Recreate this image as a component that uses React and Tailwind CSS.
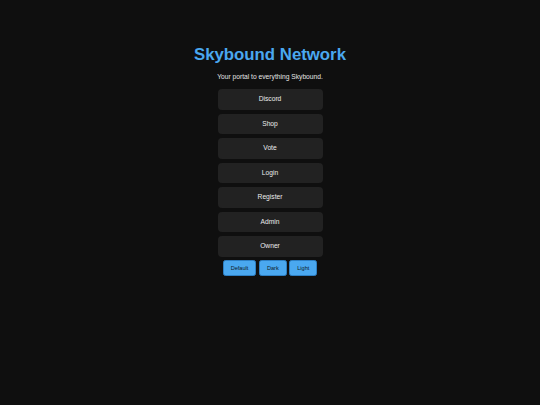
export default function App() {
  const links = ["Discord", "Shop", "Vote", "Login", "Register", "Admin", "Owner"];
  const themes = ["Default", "Dark", "Light"];

  return (
    <div
      className="min-h-[405px] w-full bg-[#0f0f0f] flex flex-col items-center pt-[45px]"
      style={{ fontFamily: '"Liberation Sans", Arial, sans-serif' }}
    >
      <h1 className="text-[16.8px] leading-[20px] font-bold text-[#4aa8f0]">Skybound Network</h1>
      <p className="mt-[8px] text-[6.7px] leading-[8px] text-[#e6e6e6]">
        Your portal to everything Skybound.
      </p>

      <div className="mt-[8px] flex flex-col gap-[4px]">
        {links.map((l) => (
          <a
            key={l}
            href="#"
            className="w-[105px] h-[20.5px] rounded-[4px] bg-[#222222] flex items-center justify-center text-[6.7px] text-[#ececec]"
          >
            {l}
          </a>
        ))}
      </div>

      <div className="mt-[3.5px] flex gap-[2.5px]">
        {themes.map((t) => (
          <button
            key={t}
            className="h-[15.7px] px-[7px] rounded-[2.5px] bg-[#4aa8f0] border border-[#2d7fc4] text-[5.6px] text-[#0f1a24]"
          >
            {t}
          </button>
        ))}
      </div>
    </div>
  );
}
